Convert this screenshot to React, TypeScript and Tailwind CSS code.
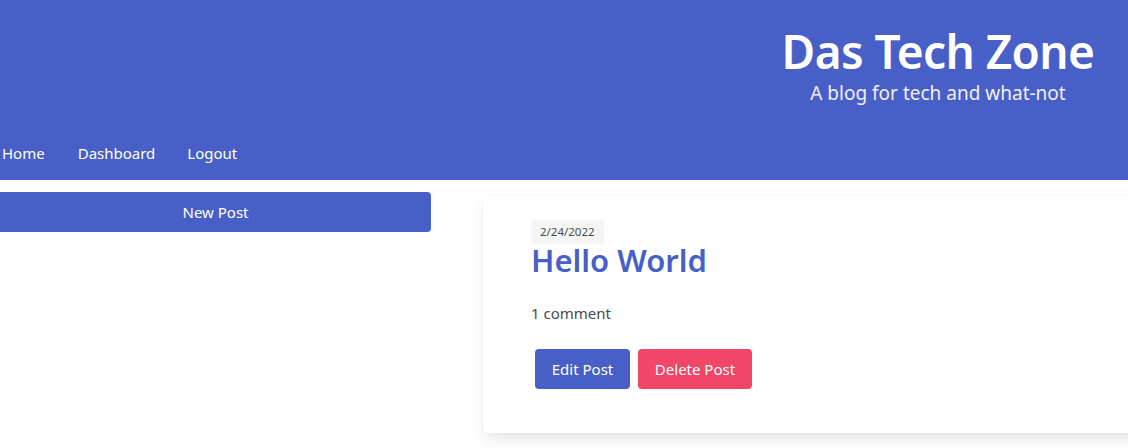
import React from "react";

export default function App() {
  const font = { fontFamily: '"Noto Sans", "Open Sans", sans-serif' };
  return (
    <div className="w-[1128px] h-[448px] overflow-hidden bg-white text-[#4a4a4a]" style={font}>
      <header className="bg-[#485fc7] h-[180px] flex flex-col">
        <div className="flex justify-end pr-[10px] pt-[22px]">
          <div className="w-[360px] text-center">
            <h1 className="text-[46px] leading-[58px] font-semibold text-white tracking-[-0.6px]">Das Tech Zone</h1>
            <p className="text-[19px] leading-[24px] text-[#f0f0fa] mt-[1px]">A blog for tech and what-not</p>
          </div>
        </div>
        <nav className="flex items-center mt-[37px] pl-[2px] text-[15px] text-white">
          <a className="mr-[33px]">Home</a>
          <a className="mr-[32px]">Dashboard</a>
          <a>Logout</a>
        </nav>
      </header>
      <main className="flex items-start">
        <div className="w-[431px] shrink-0 pt-[12px]">
          <button className="w-full h-[40px] bg-[#485fc7] text-white text-[15px] rounded-r-[4px]">New Post</button>
        </div>
        <div className="shrink-0 ml-[52px] mt-[16px] w-[700px] h-[237px] bg-white rounded-[4px] shadow-[0_8px_16px_-2px_rgba(10,10,10,0.1),0_0_0_1px_rgba(10,10,10,0.02)] pl-[48px] pt-[22px]">
          <span className="inline-block bg-[#f5f5f5] rounded-[4px] text-[11.5px] leading-[24px] h-[24px] px-[9px] text-[#4a4a4a]">2/24/2022</span>
          <h2 className="text-[31px] leading-[40px] font-semibold text-[#485fc7] -mt-[4px]">Hello World</h2>
          <p className="text-[15px] leading-[24px] mt-[21px]">1 comment</p>
          <div className="flex gap-[8px] mt-[24px] ml-[4px]">
            <button className="h-[40px] w-[95px] bg-[#485fc7] text-white text-[15px] rounded-[4px]">Edit Post</button>
            <button className="h-[40px] w-[114px] bg-[#f14668] text-white text-[15px] rounded-[4px]">Delete Post</button>
          </div>
        </div>
      </main>
    </div>
  );
}
